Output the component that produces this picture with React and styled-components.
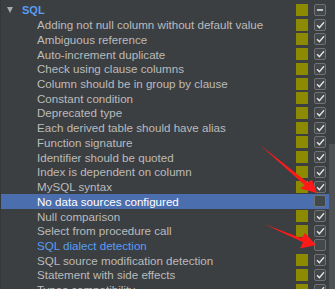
import styled, { createGlobalStyle } from 'styled-components';

const GlobalStyle = createGlobalStyle`
  html, body {
    margin: 0;
    padding: 0;
    background: #3c3f41;
    overflow: hidden;
  }
`;

const Panel = styled.div`
  position: relative;
  width: 335px;
  height: 289px;
  overflow: hidden;
  display: flex;
  background: #3c3f41;
  font-family: 'Liberation Sans', Arial, sans-serif;
  font-size: 11.6px;
  color: #bbbbbb;
`;

const Tree = styled.div`
  flex: 1;
  padding-top: 2.6px;
  border-left: 1px solid #35383a;
`;

const Row = styled.div`
  display: grid;
  grid-template-columns: 1fr 12px 12px;
  column-gap: 6px;
  align-items: center;
  height: 14.72px;
  padding-left: ${(p) => (p.$header ? '4px' : '36px')};
  padding-right: 3px;
  background: ${(p) => (p.$selected ? '#4b6eaf' : 'transparent')};
  color: ${(p) => (p.$selected ? '#ffffff' : p.$modified ? '#589df6' : '#bbbbbb')};
  white-space: nowrap;
`;

const Label = styled.span`
  display: flex;
  align-items: center;
  overflow: hidden;
`;

const HeaderName = styled.span`
  color: #589df6;
  font-weight: bold;
  font-size: 11px;
`;

const Toggle = styled.span`
  width: 0;
  height: 0;
  margin: 0 9px 0 2px;
  border-left: 3.5px solid transparent;
  border-right: 3.5px solid transparent;
  border-top: 6px solid #a8a8a8;
`;

const Severity = styled.span`
  width: 12px;
  height: 12px;
  background: ${(p) => (p.$hidden ? 'transparent' : '#8c8a00')};
`;

const Check = styled.span`
  box-sizing: border-box;
  width: 12px;
  height: 12px;
  border: 1px solid #6f7273;
  border-radius: 2px;
  background: #43484a;
  display: flex;
  align-items: center;
  justify-content: center;
`;

const Scroll = styled.div`
  width: 6px;
  display: flex;
  flex-direction: column;
`;

const Thumb = styled.div`
  flex: 1;
  margin-top: 144px;
  background: #4e5254;
`;

const Overlay = styled.svg`
  position: absolute;
  left: 0;
  top: 0;
  pointer-events: none;
`;

const CheckMark = () => (
  <svg width="9" height="8" viewBox="0 0 9 8">
    <path d="M1 4.2 L3.4 6.6 L8 1.2" fill="none" stroke="#e2e2e2" strokeWidth="1.4" />
  </svg>
);

const Dash = () => (
  <svg width="8" height="8" viewBox="0 0 8 8">
    <rect x="1" y="3.2" width="6" height="1.6" fill="#e2e2e2" />
  </svg>
);

const items = [
  { name: 'Adding not null column without default value' },
  { name: 'Ambiguous reference' },
  { name: 'Auto-increment duplicate' },
  { name: 'Check using clause columns' },
  { name: 'Column should be in group by clause' },
  { name: 'Constant condition' },
  { name: 'Deprecated type' },
  { name: 'Each derived table should have alias' },
  { name: 'Function signature' },
  { name: 'Identifier should be quoted' },
  { name: 'Index is dependent on column' },
  { name: 'MySQL syntax' },
  { name: 'No data sources configured', off: true, selected: true },
  { name: 'Null comparison' },
  { name: 'Select from procedure call' },
  { name: 'SQL dialect detection', off: true, modified: true },
  { name: 'SQL source modification detection' },
  { name: 'Statement with side effects' },
  { name: 'Types compatibility' },
];

export default function App() {
  return (
    <Panel>
      <GlobalStyle />
      <Tree>
        <Row $header>
          <Label>
            <Toggle />
            <HeaderName>SQL</HeaderName>
          </Label>
          <Severity />
          <Check>
            <Dash />
          </Check>
        </Row>
        {items.map((it) => (
          <Row key={it.name} $selected={it.selected} $modified={it.modified}>
            <Label>{it.name}</Label>
            <Severity $hidden={it.off} />
            <Check>{!it.off && <CheckMark />}</Check>
          </Row>
        ))}
      </Tree>
      <Scroll>
        <Thumb />
      </Scroll>
      {/* red arrows drawn over the list */}
      <Overlay width="335" height="289" viewBox="0 0 335 289">
        <polygon
          points="259.5,144.5 307.5,182.3 312,180 317,193 300,188.5 304.8,185.2"
          fill="#ff1a1a"
        />
        <polygon
          points="264,224 301.5,238.3 305,233 316,245 300,248.5 303,242.2"
          fill="#ff1a1a"
        />
      </Overlay>
    </Panel>
  );
}
